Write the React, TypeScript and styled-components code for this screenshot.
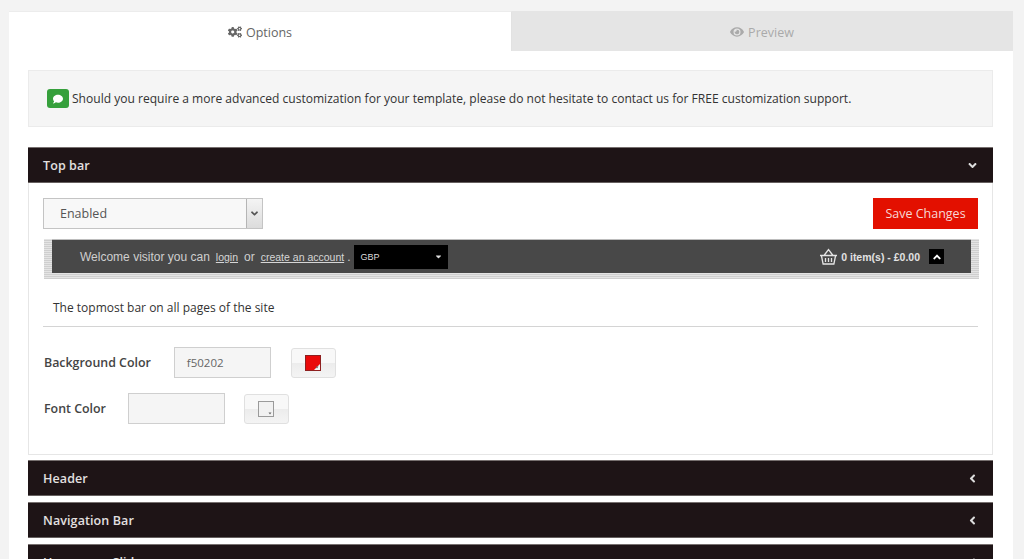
import React from "react";
import styled, { createGlobalStyle } from "styled-components";
import { FaCogs, FaEye, FaComment, FaAngleDown, FaAngleLeft, FaAngleUp, FaCaretDown } from "react-icons/fa";

const Global = createGlobalStyle`
  html, body { margin: 0; padding: 0; background: #f3f3f3; height: 559px; overflow: hidden; }
  * { box-sizing: border-box; }
  body { font-family: "Open Sans", "Liberation Sans", sans-serif; color: #3c3c3c; }
`;

const Panel = styled.main`
  width: 1004px;
  margin: 11px 0 0 9px;
  background: #fff;
  height: 548px;
  overflow: hidden;
`;
const Tabs = styled.div`
  display: grid;
  grid-template-columns: 503px 501px;
  height: 40px;
`;
const Tab = styled.div<{ $active?: boolean }>`
  display: flex;
  align-items: center;
  justify-content: center;
  gap: 4px;
  font-size: 12.5px;
  background: ${(p) => (p.$active ? "#fff" : "#e5e5e5")};
  color: ${(p) => (p.$active ? "#666" : "#aaa")};
  border-top: 1px solid ${(p) => (p.$active ? "#ececec" : "#e5e5e5")};
  border-right: 1px solid ${(p) => (p.$active ? "#e2e2e2" : "#e5e5e5")};
  padding-top: 1px;
  svg { font-size: 14px; }
`;
const Content = styled.div`
  padding: 19px 20px 0 19px;
`;
const Notice = styled.div`
  height: 57px;
  display: flex;
  align-items: center;
  gap: 3px;
  padding: 0 0 0 18px;
  background: #f5f5f5;
  border: 1px solid #ebebeb;
  font-size: 12.05px;
  color: #333;
`;
const NoticeIcon = styled.span`
  width: 22px;
  height: 19px;
  border-radius: 3px;
  background: #36a03c;
  display: flex;
  align-items: center;
  justify-content: center;
  color: #fff;
  font-size: 10px;
`;
const SectionHead = styled.div<{ $gap?: number }>`
  height: 36px;
  margin-top: ${(p) => p.$gap ?? 6}px;
  background: #1e1416;
  border-top: 1px solid #77706f;
  border-bottom: 1px solid #66605f;
  color: #e3e0e0;
  font-size: 12.5px;
  font-weight: 600;
  letter-spacing: 0.1px;
  display: flex;
  align-items: center;
  justify-content: space-between;
  padding: 0 14px 0 15px;
  svg { font-size: 13px; color: #ddd; }
`;
const SectionBody = styled.div`
  height: 272px;
  border: 1px solid #e6e6e6;
  border-top: 0;
  padding: 15px 14px 0 14px;
  margin-bottom: -1px;
`;
const TopRow = styled.div`
  display: flex;
  justify-content: space-between;
  align-items: flex-start;
  height: 31px;
`;
const SelectBox = styled.div`
  width: 220px;
  height: 31px;
  background: #f8f8f8;
  border: 1px solid #c4c4c4;
  display: flex;
  align-items: center;
  justify-content: space-between;
  padding-left: 16px;
  font-size: 12.5px;
  color: #555;
`;
const SelectArrow = styled.span`
  width: 16px;
  height: 29px;
  background: linear-gradient(#f4f4f4, #dcdcdc);
  border-left: 1px solid #b5b5b5;
  display: flex;
  align-items: center;
  justify-content: center;
  color: #555;
  font-size: 11px;
`;
const SaveButton = styled.button`
  width: 105px;
  height: 31px;
  background: #e31000;
  border: 0;
  color: #f6d9d6;
  font: 400 12.5px "Open Sans", sans-serif;
  padding: 0;
`;
const PreviewFrame = styled.div`
  margin: 10px 0 0 1px;
  width: 935px;
  height: 40px;
  padding: 0 8px;
  background: repeating-linear-gradient(0deg, #cfcfcf 0 1px, #e4e4e4 1px 2px);
`;
const PreviewBar = styled.div`
  height: 34px;
  background: #484848;
  border-top: 1px solid #bdbdbd;
  display: flex;
  align-items: center;
  padding: 0 27px 0 28px;
  color: #cfcfcf;
  font-family: "Liberation Sans", Arial, sans-serif;
  font-size: 12px;
`;
const BarLink = styled.a`
  color: #d6d6d6;
  text-decoration: underline;
  font-size: 10.5px;
`;
const BarSpacer = styled.span`
  margin: 0 6px;
`;
const Currency = styled.div`
  width: 94px;
  height: 24px;
  margin-left: 3px;
  background: #000;
  color: #ddd;
  font-size: 9px;
  display: flex;
  align-items: center;
  justify-content: space-between;
  padding: 0 5px 0 7px;
  svg { font-size: 9px; }
`;
const Cart = styled.div`
  margin-left: auto;
  display: flex;
  align-items: center;
  font-size: 10.5px;
  font-weight: 700;
  color: #e2e2e2;
`;
const CartToggle = styled.span`
  width: 15px;
  height: 15px;
  margin-left: 9px;
  background: #000;
  color: #fff;
  display: flex;
  align-items: center;
  justify-content: center;
  font-size: 12px;
`;
const Description = styled.p`
  margin: 0;
  height: 48px;
  padding: 21px 0 0 10px;
  border-bottom: 1px solid #d4d4d4;
  font-size: 12px;
  line-height: 16px;
  color: #333;
`;
const ColorRow = styled.div<{ $top: number; $gap: number }>`
  display: flex;
  align-items: center;
  margin: ${(p) => p.$top}px 0 0 1px;
  gap: ${(p) => p.$gap}px;
  height: 31px;
`;
const ColorLabel = styled.label`
  font-size: 12.4px;
  font-weight: 600;
  color: #444;
  margin-right: -17px;
  min-width: 0;
  white-space: nowrap;
`;
const ColorInput = styled.div`
  width: 97px;
  height: 31px;
  margin-left: 20px;
  background: #f5f5f5;
  border: 1px solid #cfcfcf;
  font-size: 11.5px;
  color: #666;
  line-height: 29px;
  padding-left: 12px;
`;
const Swatch = styled.div`
  width: 45px;
  height: 30px;
  border: 1px solid #e0e0e0;
  border-radius: 3px;
  background: linear-gradient(#f8f8f8 50%, #ececec 50%, #f4f4f4);
  display: flex;
  align-items: center;
  justify-content: center;
`;

const Basket = () => (
  <svg width="19" height="18" viewBox="0 0 19 18" fill="none" stroke="#e4e4e4" strokeWidth="1.3" style={{ marginRight: 3 }}>
    <path d="M1 7.5h17M2.5 8l1.6 8h10.8l1.6-8M5 7.5 9.5 1.5l4.5 6" />
    <path d="M6.5 10v4M9.5 10v4M12.5 10v4" />
  </svg>
);

const SwatchIcon = ({ color, edge }: { color: string; edge: string }) => (
  <svg width="16" height="16" viewBox="0 0 16 16">
    <rect x="0.5" y="0.5" width="15" height="15" fill={color} stroke={edge} />
    <path d="M15 9 9 15h6z" fill="#f3f3f3" />
    <path d="M10.5 11.5h3l-1.5 2z" fill="#666" />
  </svg>
);

const sections = ["Header", "Navigation Bar", "Homepage Slider"];

export default function App() {
  return (
    <>
      <Global />
      <Panel>
        <Tabs>
          <Tab $active><FaCogs /> Options</Tab>
          <Tab><FaEye /> Preview</Tab>
        </Tabs>
        <Content>
          <Notice>
            <NoticeIcon><FaComment /></NoticeIcon>
            Should you require a more advanced customization for your template, please do not hesitate to contact us for FREE customization support.
          </Notice>
          <SectionHead $gap={20}>Top bar <FaAngleDown /></SectionHead>
          <SectionBody>
            <TopRow>
              <SelectBox>Enabled<SelectArrow><FaAngleDown /></SelectArrow></SelectBox>
              <SaveButton>Save Changes</SaveButton>
            </TopRow>
            <PreviewFrame>
              <PreviewBar>
                Welcome visitor you can
                <BarSpacer><BarLink>login</BarLink></BarSpacer>
                or
                <BarSpacer><BarLink>create an account</BarLink></BarSpacer>
                <span style={{ marginLeft: -3 }}>.</span>
                <Currency>GBP <FaCaretDown /></Currency>
                <Cart>
                  <Basket /> 0 item(s) - £0.00
                  <CartToggle><FaAngleUp /></CartToggle>
                </Cart>
              </PreviewBar>
            </PreviewFrame>
            <Description>The topmost bar on all pages of the site</Description>
            <ColorRow $top={20} $gap={20}>
              <ColorLabel>Background Color</ColorLabel>
              <ColorInput>f50202</ColorInput>
              <Swatch><SwatchIcon color="#ea0a0a" edge="#8e2020" /></Swatch>
            </ColorRow>
            <ColorRow $top={15} $gap={19}>
              <ColorLabel>Font Color</ColorLabel>
              <ColorInput />
              <Swatch><SwatchIcon color="#f1f1f1" edge="#9a9a9a" /></Swatch>
            </ColorRow>
          </SectionBody>
          {sections.map((s) => (
            <SectionHead key={s}>{s} <FaAngleLeft /></SectionHead>
          ))}
        </Content>
      </Panel>
    </>
  );
}
